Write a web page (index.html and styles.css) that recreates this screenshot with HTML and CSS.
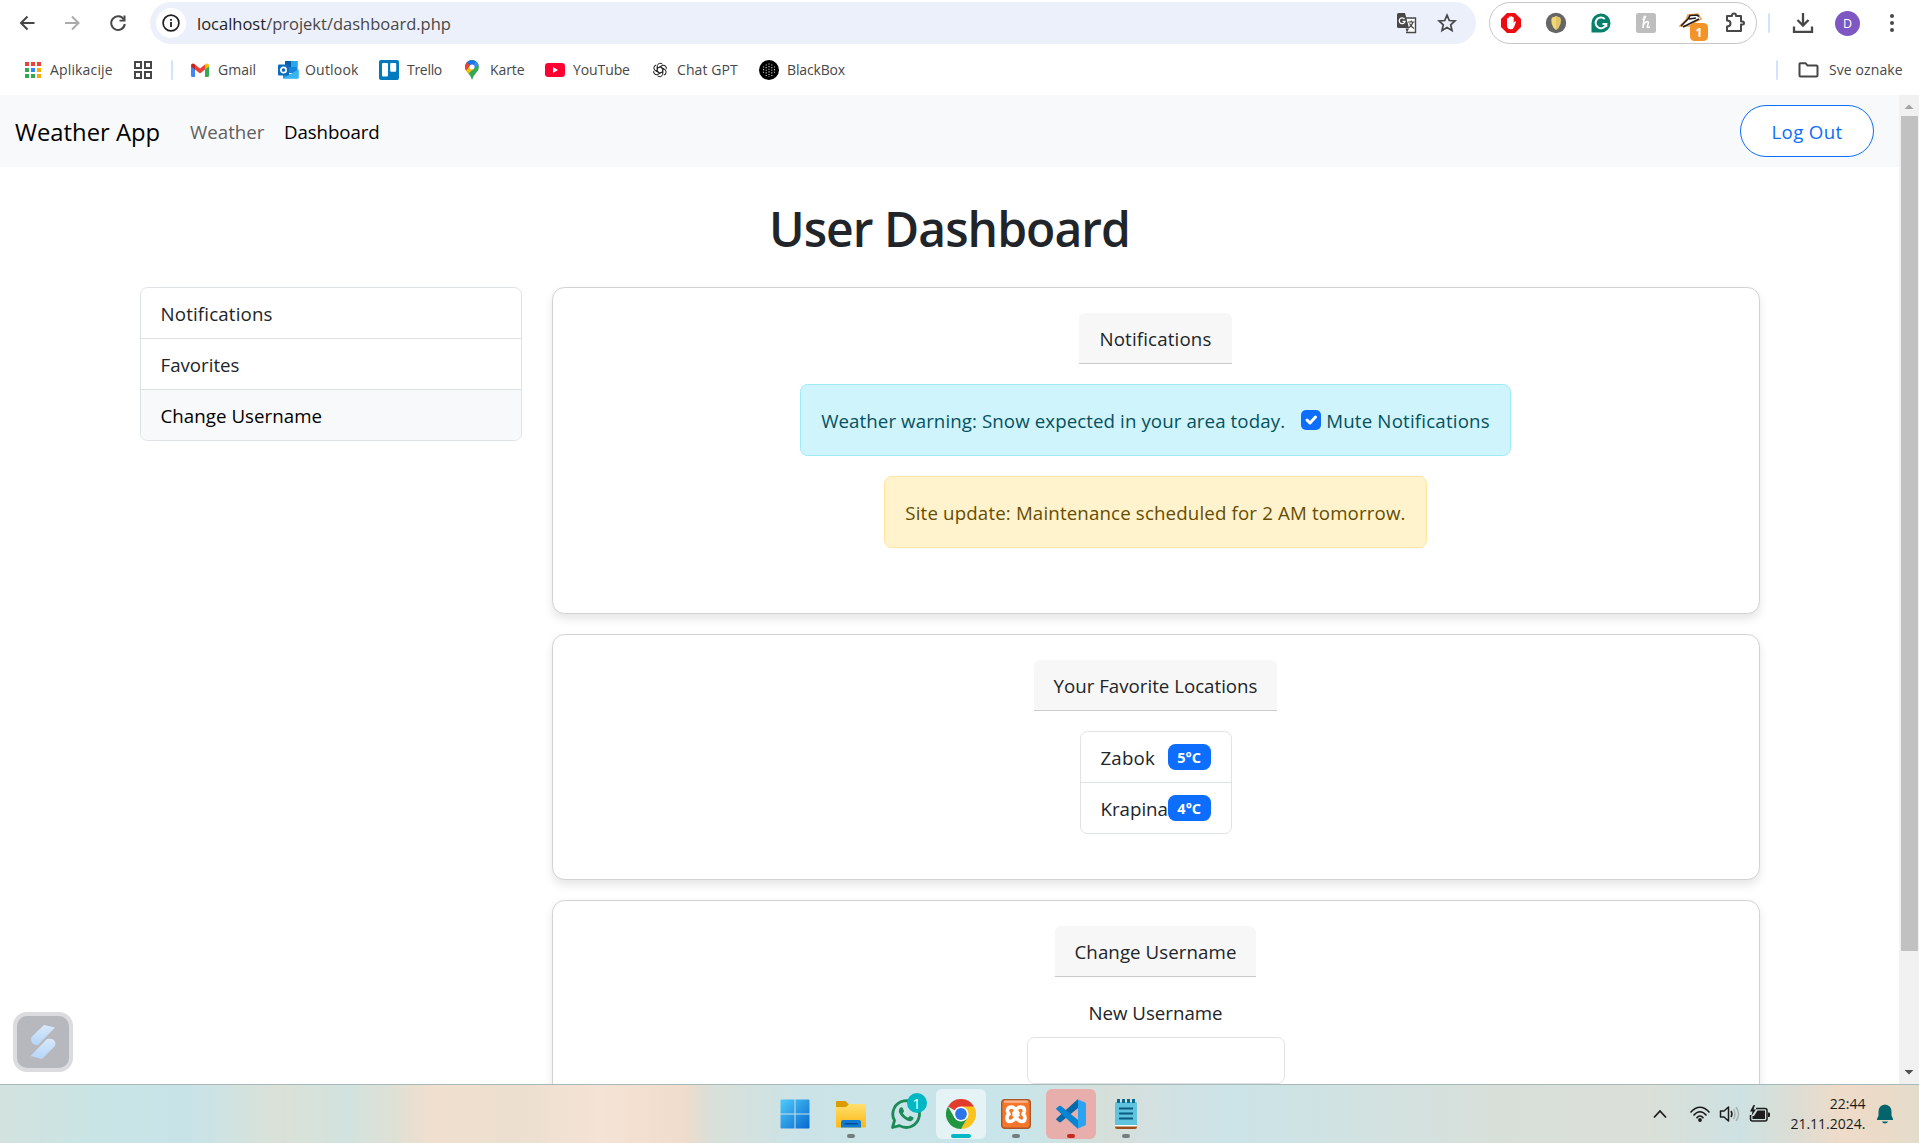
FILE: index.html
```html
<!DOCTYPE html>
<html lang="hr">
<head>
<meta charset="utf-8">
<title>User Dashboard</title>
<link rel="stylesheet" href="styles.css">
</head>
<body>
<header class="browser">
  <div class="toolbar">
    <svg class="nav-icon back" viewBox="0 0 20 20"><path d="M17.500 10H4M10.500 3.500L4 10L10.500 16.500" fill="none" stroke="#474747" stroke-width="2"/></svg>
    <svg class="nav-icon forward" viewBox="0 0 20 20"><path d="M3 10H16M10 3.500L16.500 10L10 16.500" fill="none" stroke="#ababab" stroke-width="2"/></svg>
    <svg class="nav-icon reload" viewBox="0 0 20 20"><path d="M15.800 6.500A6.800 6.800 0 1 0 16.800 11" fill="none" stroke="#474747" stroke-width="2"/><path d="M17.500 2.500V8.500H11.500V6.800H15.500V2.500Z" fill="#474747"/></svg>
    <div class="omnibox">
      <span class="site-info"><svg width="18" height="18" viewBox="0 0 18 18"><circle cx="9" cy="9" r="7.900" fill="none" stroke="#1f1f1f" stroke-width="1.700"/><path d="M9 8V13M9 5V6.800" stroke="#1f1f1f" stroke-width="1.800"/></svg></span>
      <span class="url"><b>localhost</b>/projekt/dashboard.php</span>
      <svg class="translate" width="22" height="22" viewBox="0 0 22 22"><path d="M9 6H19.500V20.500H10" fill="#fff" stroke="#474747" stroke-width="1.400"/><path d="M2.500 1H9L13 16H2.500Q1 16 1 14.500V2.500Q1 1 2.500 1Z" fill="#474747"/><path d="M8.500 7A2.900 2.900 0 1 0 9 9.300H6.500" fill="none" stroke="#fff" stroke-width="1.300"/><path d="M12 10H18.500M15.200 8.500V10M17 10Q16 14 12.500 16M13.500 11.500Q15 14.500 18 16.500" fill="none" stroke="#474747" stroke-width="1.200"/><path d="M9.500 16.500H13L11 20.500Z" fill="#474747"/></svg>
      <svg class="star" width="20" height="20" viewBox="0 0 20 20"><path d="M10 2.200L12.300 7.500L18 8L13.700 11.800L15 17.400L10 14.400L5 17.400L6.300 11.800L2 8L7.700 7.500Z" fill="none" stroke="#474747" stroke-width="1.700"/></svg>
    </div>
    <div class="extensions">
      <svg width="22" height="22" viewBox="0 0 22 22"><path d="M7 1H15L21 7V15L15 21H7L1 15V7Z" fill="#ed0c12"/><path d="M7 7Q7 6 7.800 6T8.700 7V5.300Q8.700 4.400 9.500 4.400T10.400 5.300V4.800Q10.400 4 11.200 4T12.100 4.800V5.500Q12.100 4.800 12.900 4.800T13.700 5.700V11L14.600 9.600Q15.300 8.900 16 9.600L14.300 14.500Q13.300 17.300 10.700 17.300Q7 17.300 7 13.500Z" fill="#fff"/></svg>
      <svg width="22" height="22" viewBox="0 0 22 22"><circle cx="11" cy="11" r="10.200" fill="#666"/><path d="M11 4Q13 5 15 5.600Q16.500 8 15.300 12Q14 16 11 18Q8 16 6.700 12Q5.500 8 7 5.600Q9 5 11 4Z" fill="#f0d878"/><path d="M11 4Q13 5 15 5.600Q16.500 8 15.300 12Q14 16 11 18Z" fill="#e3c566"/></svg>
      <svg width="22" height="22" viewBox="0 0 22 22"><path d="M11 1.500A9.500 9.500 0 1 1 11 20.500H1.500V11A9.500 9.500 0 0 1 11 1.500Z" fill="#04806b"/><path d="M14.800 7A5.400 5.400 0 1 0 16.300 12H12.500M16.300 12V15" fill="none" stroke="#fff" stroke-width="2"/></svg>
      <svg width="22" height="22" viewBox="0 0 22 22"><rect x="1" y="1" width="20" height="20" rx="2.500" fill="#bebebe"/><path d="M7.500 7.500Q10.500 6 10.500 4.500Q9 3.500 9 7L8 16M8.500 12.500Q11.500 8.500 13 9.800Q13.800 10.800 12.600 13.500T15 15" fill="none" stroke="#fff" stroke-width="1.600"/></svg>
      <svg class="badger" width="30" height="30" viewBox="0 0 30 30"><path d="M1 15L7 9L9 4L19 3L22 8L14 12L11 15Z" fill="#fff" stroke="#f5a04d" stroke-width="1.500"/><path d="M2 15L9 8L11 4.500L18 4L20 5.500M4 16L12 12L20 8M10 8L17 7" fill="none" stroke="#222" stroke-width="1.700"/><rect x="11" y="12" width="18" height="18" rx="4.500" fill="#f3942a"/><text x="20" y="26" text-anchor="middle" class="badge-num">1</text></svg>
      <svg width="24" height="24" viewBox="0 0 24 24"><path d="M4 5H9V4.500Q9 2.500 11 2.500T13 4.500V5H18V10.500H19.500Q21 10.500 21 12T19.500 13.500H18V20H4V15.500Q7.500 15.500 7.500 12.500T4 9.500Z" fill="none" stroke="#474747" stroke-width="2" stroke-linejoin="round"/></svg>
    </div>
    <i class="sep sep-top"></i>
    <svg class="download" width="22" height="22" viewBox="0 0 22 22"><path d="M11 1V13M5.500 8L11 13.500L16.500 8M2 14.500V19.800H20V14.500" fill="none" stroke="#474747" stroke-width="2.300"/></svg>
    <span class="avatar">D</span>
    <svg class="dots" width="6" height="20" viewBox="0 0 6 20"><g fill="#474747"><circle cx="3" cy="3" r="2"/><circle cx="3" cy="10" r="2"/><circle cx="3" cy="17" r="2"/></g></svg>
  </div>
  <div class="bookmarks">
    <div class="bm apps"><svg width="18" height="18" viewBox="0 0 18 18"><path d="M1 1h4v4H1zM7 1h4v4H7zM13 1h4v4h-4z" fill="#ea4335"/><path d="M1 7h4v4H1zM1 13h4v4H1zM7 13h4v4H7z" fill="#34a853"/><path d="M7 7h4v4H7z" fill="#2b8af7"/><path d="M13 7h4v4h-4zM13 13h4v4h-4z" fill="#fbab05"/></svg><span>Aplikacije</span></div>
    <svg class="grid-ico" width="18" height="18" viewBox="0 0 18 18"><path d="M1 1H7V7H1ZM11 1H17V7H11ZM1 11H7V17H1ZM11 11H17V17H11Z" fill="none" stroke="#474747" stroke-width="2"/></svg>
    <i class="sep sep-bm"></i>
    <div class="bm gmail"><svg width="20" height="20" viewBox="0 0 20 20"><path d="M1 6V15.500Q1 17 2.500 17H5V8Z" fill="#4285f4"/><path d="M15 8V17H17.500Q19 17 19 15.500V6Z" fill="#34a853"/><path d="M5 4.500L10 8.500L15 4.500V9.500L10 13.500L5 9.500Z" fill="#ea4335"/><path d="M1 5.500Q1 3.500 3 3.500Q4 3.500 5 4.500V9.500L1 6.500Z" fill="#c5221f"/><path d="M19 5.500Q19 3.500 17 3.500Q16 3.500 15 4.500V9.500L19 6.500Z" fill="#fbbc04"/></svg><span>Gmail</span></div>
    <div class="bm outlook"><svg width="21" height="20" viewBox="0 0 21 20"><rect x="7" y="1" width="12.500" height="12" fill="#1784d9"/><path d="M7 1H13V7H7Z" fill="#0a5ea8"/><path d="M13 1H19.500V7H13Z" fill="#28a8ea"/><path d="M5 18.500V11L12.500 14.500L20.500 9.500V17Q20.500 18.500 19 18.500Z" fill="#1a9bed"/><path d="M5 18.500L20.500 9.500V18.500Z" fill="#39b5f2"/><rect x="0" y="4.500" width="11" height="11" rx="1" fill="#0f6cbd"/><circle cx="5.500" cy="10" r="2.700" fill="none" stroke="#fff" stroke-width="1.700"/></svg><span>Outlook</span></div>
    <div class="bm trello"><svg width="20" height="20" viewBox="0 0 20 20"><rect width="20" height="20" rx="2" fill="#0079bf"/><rect x="3" y="3" width="6" height="13.500" rx="1" fill="#fff"/><rect x="11.200" y="3" width="6" height="8.800" rx="1" fill="#fff"/></svg><span>Trello</span></div>
    <div class="bm karte"><svg width="14" height="20" viewBox="0 0 14 20"><path d="M7 0A7 7 0 0 1 14 7Q14 10 11 13Q8 16 7 20Q6 16 3 13Q0 10 0 7A7 7 0 0 1 7 0Z" fill="#34a853"/><path d="M7 0A7 7 0 0 0 1.600 2.500L7 7L11 1.500Q9.500 0 7 0Z" fill="#1a73e8"/><path d="M1.600 2.500A7 7 0 0 0 1 10.500L7 7Z" fill="#ea4335"/><path d="M11 1.500L7 7L3 13L13.600 5Q13 3 11 1.500Z" fill="#4285f4"/><path d="M1 10.500L3.500 13.500L9 8.500L5 6Z" fill="#fbbc04"/><circle cx="7" cy="7" r="2.500" fill="#fff"/></svg><span>Karte</span></div>
    <div class="bm youtube"><svg width="20" height="14" viewBox="0 0 20 14"><rect width="20" height="14" rx="3.200" fill="#ff0033"/><path d="M8 4V10L13 7Z" fill="#fff"/></svg><span>YouTube</span></div>
    <div class="bm gpt"><svg width="16" height="16" viewBox="0 0 16 16"><g fill="none" stroke="#222" stroke-width="1"><path id="petal" d="M5.300 8.400V3.700A3 3 0 0 1 10.400 2.200M5.300 6.400L9.400 4"/><use href="#petal" transform="rotate(60 8 8)"/><use href="#petal" transform="rotate(120 8 8)"/><use href="#petal" transform="rotate(180 8 8)"/><use href="#petal" transform="rotate(240 8 8)"/><use href="#petal" transform="rotate(300 8 8)"/></g></svg><span>Chat GPT</span></div>
    <div class="bm blackbox"><svg width="20" height="20" viewBox="0 0 20 20"><circle cx="10" cy="10" r="10" fill="#000"/><g stroke="#ccc" stroke-width="1.100" stroke-dasharray="1.100 1.500"><path d="M4.500 6.500V14M7.200 4.500V16M10 3.500V17M12.800 4.500V16M15.500 6.500V14"/></g></svg><span>BlackBox</span></div>
    <i class="sep sep-all"></i>
    <div class="bm all"><svg width="21" height="16" viewBox="0 0 21 16"><path d="M2 1.200H7.500L9.500 3.500H18.500Q19.500 3.500 19.500 4.500V13.500Q19.500 14.500 18.500 14.500H2.500Q1.500 14.500 1.500 13.500V2Q1.500 1.200 2 1.200Z" fill="none" stroke="#474747" stroke-width="2"/></svg><span>Sve oznake</span></div>
  </div>
</header>

<div class="viewport">
  <div class="page">
    <nav class="navbar">
      <a class="brand">Weather App</a>
      <a class="link">Weather</a>
      <a class="link active">Dashboard</a>
      <a class="logout">Log Out</a>
    </nav>
    <main class="container">
      <h1>User Dashboard</h1>
      <div class="row">
        <ul class="list sidebar">
          <li class="wide">Notifications</li>
          <li>Favorites</li>
          <li class="current">Change Username</li>
        </ul>
        <div class="cards">
          <section class="card notes">
            <div class="card-header wide">Notifications</div>
            <div class="alert info"><span>Weather warning: Snow expected in your area today.</span>
              <svg class="check" width="20" height="20" viewBox="0 0 20 20"><rect width="20" height="20" rx="5" fill="#0d6efd"/><path d="M6 10L9 13L14.500 7" fill="none" stroke="#fff" stroke-width="3" stroke-linecap="round" stroke-linejoin="round"/></svg>
              <span class="mute">Mute Notifications</span></div>
            <div class="alert warning"><span>Site update: Maintenance scheduled for 2 AM tomorrow.</span></div>
          </section>
          <section class="card favs">
            <div class="card-header places">Your Favorite Locations</div>
            <ul class="list cities">
              <li><span class="wide">Zabok</span><span class="badge">5°C</span></li>
              <li><span>Krapina</span><span class="badge">4°C</span></li>
            </ul>
          </section>
          <section class="card username">
            <div class="card-header">Change Username</div>
            <label>New Username</label>
            <input type="text">
          </section>
        </div>
      </div>
    </main>
  </div>
  <div class="scrollbar">
    <svg width="20" height="22" viewBox="0 0 20 22"><path d="M5.500 14L10 9.500L14.500 14Z" fill="#a3a3a3"/></svg>
    <i class="thumb"></i>
    <svg class="down" width="20" height="22" viewBox="0 0 20 22"><path d="M5.500 8L10 12.500L14.500 8Z" fill="#505050"/></svg>
  </div>
  <div class="widget"><svg width="26" height="34" viewBox="0 0 26 34"><defs><linearGradient id="wg" x1="0" y1="0" x2="0" y2="1"><stop offset="0" stop-color="#d8e9fa"/><stop offset="1" stop-color="#b5d5f8"/></linearGradient></defs><path d="M14 0L25 2.500L8 20Q1 20 1 14Q1 12.500 2.500 11Z" fill="url(#wg)"/><path d="M12 34L0.500 31L17 14Q25 12.500 25.500 19Q25.500 20.500 24 22Z" fill="url(#wg)"/></svg></div>
</div>

<footer class="taskbar">
  <div class="dock">
    <div class="app start"><svg width="30" height="30" viewBox="0 0 30 30"><defs><linearGradient id="win" x1="0" y1="0" x2="1" y2="1"><stop offset="0" stop-color="#4fcbfb"/><stop offset="1" stop-color="#0669ce"/></linearGradient></defs><path d="M1.500 .5H14.500V14.500H.5V1.500Q.5 .5 1.500 .5ZM15.500 .5H28.500Q29.500 .5 29.500 1.500V14.500H15.500ZM.5 15.500H14.500V29.500H1.500Q.5 29.500 .5 28.500ZM15.500 15.500H29.500V28.500Q29.500 29.500 28.500 29.500H15.500Z" fill="url(#win)"/></svg></div>
    <div class="app open"><svg width="30" height="30" viewBox="0 0 30 30"><defs><linearGradient id="fol" x1="0" y1="0" x2="0" y2="1"><stop offset="0" stop-color="#ffdf6e"/><stop offset="1" stop-color="#fcb813"/></linearGradient></defs><path d="M0 3Q0 2 1 2H9.500L12.500 5H28V9H0Z" fill="#dc9b00"/><path d="M0 8H10L13 5H29Q30 5 30 6V27.500Q30 28.500 29 28.500H1Q0 28.500 0 27.500Z" fill="url(#fol)"/><path d="M5 28.500V23Q5 21 7 21H23Q25 21 25 23V28.500Z" fill="#0f7bd4"/><rect x="8.500" y="24" width="13" height="1.500" fill="#074a91"/></svg></div>
    <div class="app"><svg width="30" height="30" viewBox="0 0 30 30"><path d="M1.500 28.500L3.500 21.500A13.300 13.300 0 1 1 8.500 26.600Z" fill="none" stroke="#1c8a58" stroke-width="2.800" stroke-linejoin="round"/><path d="M8.500 9.500Q10 7.500 11.500 8.500L13 12Q13 13 11.800 14.200Q14 17.500 17 18.700L18.800 17Q19.500 16.500 22.500 18.500Q23 20 21 21.500Q18 23.500 13 19.500Q6 14 8.500 9.500Z" fill="#1c8a58"/></svg><span class="count">1</span></div>
    <div class="app open active"><svg width="30" height="30" viewBox="0 0 30 30"><path d="M15 15L2 7.500A15 15 0 0 1 28 7.500Z" fill="#e33b2e"/><path d="M28 7.500A15 15 0 0 1 15 30L21.500 18.700L15 7.500Z" fill="#fcc31c"/><path d="M2 7.500A15 15 0 0 0 15 30L21.500 18.700H8.500Z" fill="#22953f"/><circle cx="15" cy="15" r="7.500" fill="#fff"/><circle cx="15" cy="15" r="5.900" fill="#2d76ea"/></svg></div>
    <div class="app open"><svg width="30" height="30" viewBox="0 0 30 30"><rect x=".7" y=".7" width="28.600" height="28.600" rx="3" fill="#f4762a" stroke="#a9572a" stroke-width="1.400"/><rect x="3" y="1.600" width="24" height="2.200" rx="1" fill="#f9b68c"/><path d="M15 11.500Q13.500 8 10.500 8Q6.500 8 6.500 11.500Q6.500 13.500 8 15Q6 16.500 6 19Q6 22.500 9 22.500Q12 22.500 15 18.500Q18 22.500 21 22.500Q24 22.500 24 19Q24 16.500 22 15Q23.500 13.500 23.500 11.500Q23.500 8 19.500 8Q16.500 8 15 11.500ZM12 12.500L18 17.500M18 12.500L12 17.500" fill="none" stroke="#fff" stroke-width="3.600" stroke-linejoin="round"/></svg></div>
    <div class="app open alerting"><svg width="30" height="30" viewBox="0 0 30 30"><path d="M0 20.500L3 23Q4 23.500 5 23L22 9V0L1 19Q0 20 0 20.500Z" fill="#0569ab"/><path d="M0 9.500L3 7Q4 6.500 5 7L22 21V30L1 11Q0 10 0 9.500Z" fill="#0784d2"/><path d="M21 0L29 3.500Q30 4 30 5V25Q30 26 29 26.500L21 30Q22 29 22 27.500V2.500Q22 1 21 0Z" fill="#2aa4f2"/></svg></div>
    <div class="app open"><svg width="24" height="30" viewBox="0 0 24 30"><path d="M1 27H23V28Q23 30 21 30H3Q1 30 1 28Z" fill="#9c4f18"/><path d="M1 26H23V27.500H1Z" fill="#fff"/><path d="M1 4Q1 3 2 3H22Q23 3 23 4V26H1Z" fill="#5fc3de"/><path d="M5 9.500H19M5 14.500H19M5 19.500H19" stroke="#0b5a80" stroke-width="2"/><path d="M4.500 0V4M9.500 0V4M14.500 0V4M19.500 0V4" stroke="#0b6a8e" stroke-width="3"/></svg></div>
  </div>
  <div class="tray">
    <svg class="chev" width="14" height="10" viewBox="0 0 14 10"><path d="M1 8.500L7 2L13 8.500" fill="none" stroke="#1c1c1c" stroke-width="1.800"/></svg>
    <svg class="wifi" width="22" height="18" viewBox="0 0 22 18"><g fill="none" stroke="#1c1c1c" stroke-width="1.500"><path d="M1.500 7.500Q11-3 20.500 7.500M4.500 10.500Q11 3 17.500 10.500M7.500 13.200Q11 9 14.500 13.200"/></g><circle cx="11" cy="15" r="1.900" fill="#1c1c1c"/></svg>
    <svg class="vol" width="22" height="18" viewBox="0 0 22 18"><path d="M1.500 6H5L9.500 2V16L5 12H1.500Z" fill="none" stroke="#1c1c1c" stroke-width="1.500" stroke-linejoin="round"/><path d="M12 6Q14 9 12 12" fill="none" stroke="#1c1c1c" stroke-width="1.500"/><path d="M14.500 4Q17.500 9 14.500 14M17 2Q22 9 17 16" fill="none" stroke="#a9afac" stroke-width="1.400"/></svg>
    <svg class="bat" width="22" height="18" viewBox="0 0 22 18"><path d="M7 3.500H16Q18 3.500 18 5.500V14Q18 16 16 16H3.500Q1.500 16 1.500 14V10" fill="none" stroke="#1c1c1c" stroke-width="1.500"/><path d="M8.500 5.500H16V14H3.500V11H5Z" fill="#1c1c1c"/><path d="M19 7.500H20Q21 7.500 21 8.500V11Q21 12 20 12H19Z" fill="#1c1c1c"/><path d="M4.500 0L1 6.500H3.500L2.500 11L7 4.500H4.500L6 0Z" fill="#1c1c1c"/></svg>
    <div class="clock"><span>22:44</span><span>21.11.2024.</span></div>
    <svg class="bell" width="18" height="20" viewBox="0 0 18 20"><path d="M9 .5Q15.500 1 15.500 8V11.500L17 15V16H1V15L2.500 11.500V8Q2.500 1 9 .5ZM6 17.500H12Q11.500 19.500 9 19.500T6 17.500Z" fill="#04646b"/></svg>
  </div>
</footer>
</body>
</html>
```
FILE: styles.css
```css
* { box-sizing: border-box; }
body {
  margin: 0;
  width: 1919px;
  height: 1143px;
  overflow: hidden;
  display: flex;
  flex-direction: column;
  background: #fff;
  color: #212529;
  font-family: "Open Sans", "Noto Sans", sans-serif;
  font-size: 18.7px;
  line-height: 30px;
}
svg { display: block; flex: none; }
ul { list-style: none; margin: 0; padding: 0; }
span { white-space: nowrap; }

/* Browser chrome */
.browser { height: 95px; flex: none; }
.toolbar { display: flex; align-items: center; height: 46px; }
.nav-icon { width: 20px; height: 20px; }
.back { margin-left: 17px; }
.forward { margin-left: 25px; }
.reload { margin-left: 26px; }
.omnibox {
  display: flex;
  align-items: center;
  width: 1326px;
  height: 42px;
  margin-left: 22px;
  padding-left: 6px;
  border-radius: 21px;
  background: #ecf0fa;
}
.site-info {
  display: grid;
  place-items: center;
  width: 30px;
  height: 30px;
  border-radius: 50%;
  background: #fff;
}
.url { margin-left: 11px; padding-top: 2px; font-size: 16.500px; color: #474747; }
.url b { font-weight: 400; color: #1f1f1f; }
.translate { margin-left: auto; }
.star { margin: 0 19px 0 19px; }
.extensions {
  display: flex;
  align-items: center;
  gap: 22.900px;
  width: 268px;
  height: 42px;
  margin-left: 13px;
  padding-left: 10px;
  border: 1px solid #c7c7c7;
  border-radius: 21px;
}
.badger { margin: 6px -8.500px 0 -.5px; }
.badge-num { font: 700 12px "Open Sans", sans-serif; fill: #fff; }
.sep { width: 2px; height: 20px; border-radius: 1px; background: #d3e3fd; }
.sep-top { margin-left: 11px; }
.download { margin-left: 22px; }
.avatar {
  width: 25px;
  height: 25px;
  margin-left: 21px;
  border-radius: 50%;
  background: #7e57c2;
  color: #fff;
  font-size: 12.500px;
  line-height: 25px;
  text-align: center;
}
.dots { margin-left: 29px; }

.bookmarks {
  display: flex;
  align-items: center;
  height: 47px;
  font-size: 14px;
  color: #474747;
}
.bm { display: flex; align-items: center; flex: none; }
.bm span { margin-left: 8px; }
.apps { width: 110px; margin-left: 24px; letter-spacing: .15px; }
.sep-bm { margin-left: 19px; }
.gmail { width: 88px; margin-left: 17px; }
.outlook { width: 101px; letter-spacing: .2px; }
.outlook span { margin-left: 6px; }
.trello { width: 86px; letter-spacing: -.3px; }
.karte { width: 80px; letter-spacing: -.1px; }
.karte span { margin-left: 11px; }
.youtube { width: 107px; letter-spacing: -.1px; }
.gpt { width: 107px; letter-spacing: .1px; }
.gpt span { margin-left: 9px; }
.blackbox { letter-spacing: -.15px; }
.sep-all { margin-left: auto; }
.all { width: 141px; padding-left: 20px; letter-spacing: .1px; }
.all span { margin-left: 10px; }

/* Web page */
.viewport { position: relative; display: flex; flex: 1; min-height: 0; }
.page { flex: 1; overflow: hidden; background: #fff; }
.navbar {
  display: flex;
  align-items: center;
  height: 72px;
  padding: 0 25px 0 15px;
  background: #f8f9fa;
}
.brand { width: 175px; padding-top: 2px; color: #000; font-size: 23.800px; }
.link { width: 94px; padding-top: 2px; color: #5f6062; }
.link.active { color: #000; letter-spacing: -.08px; }
.logout {
  width: 134px;
  height: 52px;
  margin-left: auto;
  border: 1px solid #0d6efd;
  border-radius: 26px;
  background: #fff;
  color: #0d6efd;
  letter-spacing: .35px;
  line-height: 52px;
  text-align: center;
}
.container { width: 1650px; margin: 0 auto; padding: 30px 15px 0; }
h1 {
  height: 60px;
  margin: 0 0 30px;
  font-size: 48px;
  font-weight: 600;
  letter-spacing: -.95px;
  line-height: 63px;
  text-align: center;
}
.row { display: grid; grid-template-columns: 382px 1208px; gap: 30px; align-items: start; }
.list { border: 1px solid #dee2e6; border-radius: 7.500px; overflow: hidden; }
.list li { height: 50px; padding: 11px 20px 9px; }
.list li + li { height: 51px; border-top: 1px solid #dee2e6; }
.list .current { background: #f8f9fa; color: #000; letter-spacing: .05px; }
.wide { letter-spacing: .16px; }
.cards { display: flex; flex-direction: column; gap: 20px; }
.card {
  display: flex;
  flex-direction: column;
  align-items: center;
  padding: 25px;
  border: 1px solid #d2d2d2;
  border-radius: 12.500px;
  background: #fff;
  box-shadow: 0 5px 10px rgba(0, 0, 0, .1);
}
.notes { height: 327px; }
.favs { height: 246px; }
.username { height: 330px; }
.card-header {
  height: 51px;
  margin-bottom: 20px;
  padding: 11px 20px 9px;
  border-bottom: 1px solid #cacaca;
  border-radius: 6px 6px 0 0;
  background: #f7f7f7;
}
.username .card-header { letter-spacing: .07px; }
.alert {
  display: flex;
  height: 72px;
  margin-bottom: 20px;
  padding: 21px 20px;
  border: 1px solid;
  border-radius: 7.500px;
}
.info { background: #cff4fc; border-color: #9eeaf9; color: #055160; letter-spacing: .09px; }
.warning { background: #fff3cd; border-color: #ffe69c; color: #664d03; letter-spacing: .15px; }
.mute { letter-spacing: .19px; }
.check { margin: 4px 5px 0 16px; }
.cities { width: 152px; }
.cities li { display: flex; justify-content: space-between; }
.badge {
  width: 43px;
  height: 26px;
  margin-top: 1px;
  border-radius: 7.500px;
  background: #0d6efd;
  color: #fff;
  font-size: 14.500px;
  font-weight: 700;
  line-height: 27px;
  text-align: center;
}
.username label { margin-top: 1px; }
.username input {
  width: 258px;
  height: 47px;
  flex: none;
  margin-top: 9px;
  border: 1px solid #dee2e6;
  border-radius: 7.500px;
  background: #fff;
}

.scrollbar { display: flex; flex-direction: column; width: 20px; background: #f1f1f1; }
.thumb { width: 17px; height: 835px; margin-left: 2px; margin-top: -1px; background: #c1c1c1; }
.scrollbar .down { margin-top: auto; }

.widget {
  position: absolute;
  left: 13px;
  bottom: 12px;
  display: grid;
  place-items: center;
  width: 60px;
  height: 60px;
  border: 4px solid #dbdbe0;
  border-radius: 14px;
  background: #b7b8be;
}

/* Taskbar */
.taskbar {
  display: grid;
  grid-template-columns: 768px 385px 1fr;
  height: 59px;
  flex: none;
  border-top: 1px solid #a9b8b8;
  background: linear-gradient(90deg, #d2e2de 0, #c8e4e5 100px, #c8e3e8 190px, #dae1d7 280px, #d2e2de 350px, #dfe0d5 395px, #f0dfce 430px, #ecdfcf 520px, #f5e3d5 600px, #efdccb 685px, #dadfd8 710px, #d3e1de 750px, #cbe3e7 800px, #c8e5e9 1020px, #d6dfd9 1110px, #d3e1e2 1160px, #cbe3e7 1230px, #d0e2e2 1340px, #d8dfd9 1500px, #dadfd8 1650px, #cee1e2 1740px, #dcddd4 1795px, #eedbc9 1840px, #ecdac8 1880px, #e3dccb 1919px);
}
.dock { grid-column: 2; display: flex; padding-top: 4px; }
.app {
  position: relative;
  display: grid;
  place-items: center;
  width: 50px;
  height: 50px;
  margin: 0 2.500px;
  border-radius: 6px;
}
.app.start { margin: 0 3.500px 0 1.500px; }
.app.open::after {
  content: "";
  position: absolute;
  left: 21px;
  bottom: 1px;
  width: 8px;
  height: 4px;
  border-radius: 2px;
  background: #747d80;
}
.app.active { background: #e5f3f6; }
.app.active::after { left: 15px; width: 20px; background: #00b7c3; }
.app.alerting { background: #e8aeab; }
.app.alerting::after { background: #c42b1c; }
.count {
  position: absolute;
  left: 26px;
  top: 4px;
  width: 20px;
  height: 20px;
  border-radius: 50%;
  background: #00b7c3;
  color: #fff;
  font-size: 15px;
  line-height: 20px;
  text-align: center;
}
.tray { display: flex; align-items: center; padding-left: 500px; }
.chev { margin-right: 22px; }
.wifi { margin-right: 8px; }
.vol { margin-right: 8px; }
.clock {
  display: flex;
  flex-direction: column;
  align-items: flex-end;
  width: 94.500px;
  color: #1c1c1c;
  font-size: 14px;
  line-height: 20px;
}
.bell { margin-left: 10.500px; }
```
